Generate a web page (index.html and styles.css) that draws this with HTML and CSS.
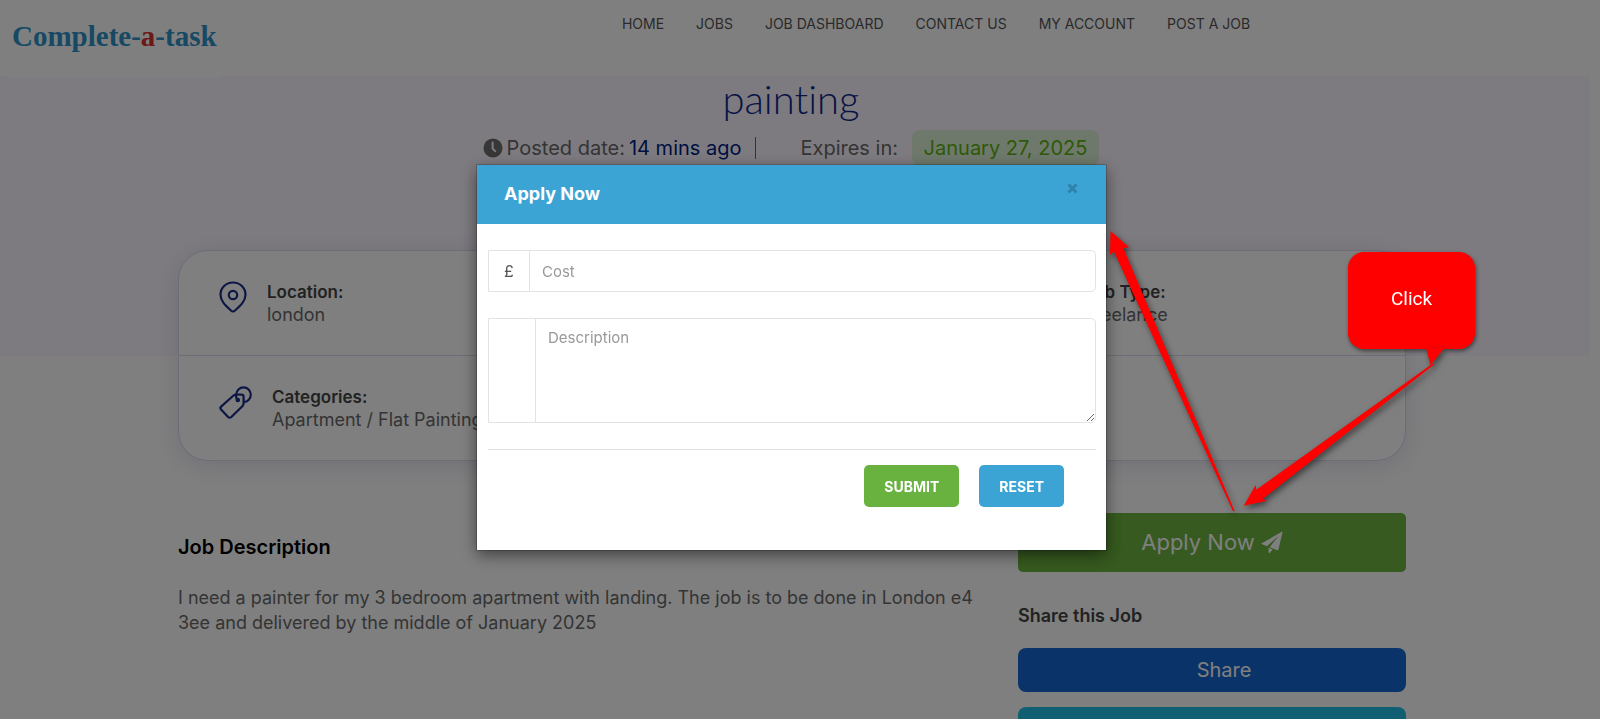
FILE: index.html
```html
<!DOCTYPE html>
<html lang="en">
<head>
  <meta charset="UTF-8" />
  <meta name="viewport" content="width=device-width, initial-scale=1.0"/>
  <title>painting – Complete-a-task</title>
  <link rel="stylesheet" href="styles.css">
</head>
<body>
<div class="page">
  <header class="header">
    <a class="logo" href="#">Complete-<span>a</span>-task</a>
    <nav class="nav">
      <a href="#">HOME</a>
      <a href="#">JOBS</a>
      <a href="#">JOB DASHBOARD</a>
      <a href="#">CONTACT US</a>
      <a href="#">MY ACCOUNT</a>
      <a href="#">POST A JOB</a>
    </nav>
  </header>

  <section class="hero">
    <h1>painting</h1>
    <div class="meta">
      <div class="posted">
        <svg width="20" height="20" viewBox="0 0 20 20">
          <circle cx="10" cy="10" r="9.500" fill="#6e6e6e"/>
          <path d="M9.600 4.500v6l2.600 2.600" fill="none" stroke="#fbf7ff" stroke-width="2" stroke-linecap="round" stroke-linejoin="round"/>
        </svg>
        Posted date: <span class="ago">14 mins ago</span>
      </div>
      <div class="expires">Expires in: <span class="pill">January 27, 2025</span></div>
    </div>
  </section>

  <main class="container">
    <div class="info-card">
      <div class="info-row">
        <div class="info-item">
          <svg width="28" height="32" viewBox="0 0 28 32" fill="none" stroke="#1c2c86" stroke-width="2.200" stroke-linejoin="round">
            <path d="M14 30.500c-.8 0-1.400-.4-2-1C6.500 24.600 1.500 20 1.500 13.700 1.500 6.800 7 1.500 14 1.500s12.500 5.300 12.500 12.200c0 6.300-5 10.900-10.500 15.800-.6.600-1.200 1-2 1z"/>
            <circle cx="14" cy="14" r="4.200"/>
          </svg>
          <div>
            <h5>Location:</h5>
            <p>london</p>
          </div>
        </div>
        <div class="info-item"></div>
        <div class="info-item">
          <svg width="28" height="32" viewBox="0 0 28 32" fill="none" stroke="#1c2c86" stroke-width="2.200">
            <rect x="2" y="8" width="24" height="20" rx="3"/>
            <path d="M9 8V4h10v4M2 17h24"/>
          </svg>
          <div>
            <h5>Job Type:</h5>
            <p>Freelance</p>
          </div>
        </div>
      </div>
      <div class="info-row">
        <div class="info-item">
          <svg width="33" height="33" viewBox="0 0 33 33" fill="none" stroke="#1c2c86" stroke-width="2.200" stroke-linejoin="round" stroke-linecap="round">
            <path d="M14.500 9.500 2.100 20.600c-1 1-1 2 0 3l7 7.400c1 1 2.200 1 3.200 0L23.600 20c.7-.8 1-1.400 1-2.400V10.600c0-1.200-.8-2-2-2l-5.200-.1c-1.200 0-2 .2-2.900 1z"/>
            <path d="M17.200 8.500A7.300 7.300 0 1 1 24.800 16"/>
            <path d="M17.200 8.500c-.4 2 0 4 1.400 5.500"/>
            <circle cx="18.800" cy="14" r="1.200" fill="#1c2c86"/>
          </svg>
          <div>
            <h5>Categories:</h5>
            <p>Apartment / Flat Painting</p>
          </div>
        </div>
      </div>
    </div>

    <div class="columns">
      <article class="description">
        <h3>Job Description</h3>
        <p>I need a painter for my 3 bedroom apartment with landing. The job is to be done in London e4 3ee and delivered by the middle of January 2025</p>
      </article>
      <aside class="sidebar">
        <button class="apply-btn" type="button">Apply Now
          <svg width="22" height="22" viewBox="0 0 22 22" fill="#fff">
            <path d="M21.700.3 0 12.700l6 2.600L17.500 5 8.700 16.200l6.800 2.900c.9.400 1.900-.1 2.100-1.100z"/>
            <path d="M7.500 16.800v4.200c0 1 1.200 1.300 1.800.5l2.300-3z"/>
          </svg>
        </button>
        <h4>Share this Job</h4>
        <a class="share facebook" href="#">Share</a>
        <a class="share twitter" href="#" aria-label="Twitter"></a>
      </aside>
    </div>
  </main>
</div>

<div class="backdrop"></div>

<div class="modal" role="dialog" aria-labelledby="applyTitle">
  <div class="modal-dialog">
    <div class="modal-header">
      <h4 id="applyTitle">Apply Now</h4>
      <button class="close" type="button" aria-label="Close">
        <svg width="11" height="11" viewBox="0 0 11 11" stroke="#2f82a9" stroke-width="3"><path d="M1.500 1.500l8 8M9.500 1.500l-8 8"/></svg>
      </button>
    </div>
    <form class="modal-body">
      <div class="field">
        <label class="addon" for="cost">£</label>
        <input type="text" id="cost" placeholder="Cost">
      </div>
      <div class="field">
        <label class="addon wide" for="description" aria-label="Description"></label>
        <textarea id="description" placeholder="Description"></textarea>
      </div>
      <div class="actions">
        <button class="btn submit" type="submit">SUBMIT</button>
        <button class="btn reset" type="reset">RESET</button>
      </div>
    </form>
  </div>
</div>

<!-- hint arrows and callout -->
<div class="hints">
  <div class="callout">Click</div>
  <svg class="arrows" width="400" height="300" viewBox="1100 220 400 300" fill="#f00">
    <path d="M1110.500 231 1129 247.300 1123.400 248.300 1234.600 511 1233 511.300 1114 251.700 1110 255z"/>
    <path d="M1243.800 505.700 1255.600 485 1256.300 489.700 1433.400 363 1434.200 364.500 1262.700 499 1267 500.700z"/>
    <path d="M1426 348l4.500 17 14-17z"/>
  </svg>
</div>
</body>
</html>
```
FILE: styles.css
```css
* {
  box-sizing: border-box;
}

body {
  margin: 0;
  font-family: Inter, sans-serif;
  font-size: 18px;
  line-height: 25px;
  color: #696969;
  background: #fff;
}
h1, h3, h4, h5, p {
  margin: 0;
}
a {
  text-decoration: none;
}
button {
  font-family: inherit;
  border: none;
  cursor: pointer;
}
/* page does not scroll while the modal is open */
.page {
  height: 100vh;
  overflow: hidden;
  padding-right: 10px;
}

/* header */
.header {
  display: flex;
  align-items: flex-start;
  height: 76px;
}
.logo {
  width: 210px;
  height: 78px;
  margin-left: 10px;
  padding-left: 2px;
  font-family: "Liberation Serif", serif;
  font-size: 29px;
  font-weight: bold;
  line-height: 72px;
  color: #2f92c8;
  background: #fff;
  z-index: 1;
  white-space: nowrap;
}
.logo span {
  color: #d8302e;
}
.nav {
  flex: 1;
  display: flex;
  justify-content: center;
  gap: 32px;
  padding-top: 12px;
  padding-left: 62px;
}
.nav a {
  font-size: 14px;
  line-height: 24px;
  color: #555;
}

/* hero */
.hero {
  height: 280px;
  padding-right: 8px;
  background: #fbf7ff;
  text-align: center;
}
.hero h1 {
  font-family: Lato, sans-serif;
  font-size: 40px;
  font-weight: 300;
  font-variant-ligatures: none;
  line-height: 46px;
  color: #10288a;
}
.meta {
  display: flex;
  justify-content: center;
  align-items: center;
  margin-top: 8px;
  font-size: 20px;
  line-height: 36px;
}
.posted {
  display: flex;
  align-items: center;
  gap: 4px;
}
.posted::after {
  content: "";
  height: 22px;
  margin-left: 10px;
  border-left: 1px solid #696969;
}
.ago {
  color: #001c84;
}
.expires {
  margin-left: 44px;
}
.pill {
  display: inline-block;
  margin-left: 8px;
  padding: 0 12px;
  border-radius: 8px;
  color: #5db312;
  background: #def2d6;
}

/* content */
.container {
  max-width: 1234px;
  margin: -106px auto 0;
  padding-right: 6px;
}
.info-card {
  background: #fff;
  border: 1px solid #dcd8ee;
  border-radius: 30px;
  box-shadow: 0 5px 25px rgba(65, 40, 140, 0.15);
}
.info-row {
  display: grid;
  grid-template-columns: repeat(3, 1fr);
  height: 104px;
}
.info-row + .info-row {
  height: 105px;
  border-top: 1px solid #dcd8ee;
}
.info-item {
  display: flex;
  gap: 20px;
  padding: 30px 0 0 40px;
  white-space: nowrap;
}
.info-item h5 {
  font-size: 17px;
  font-weight: 600;
  line-height: 22px;
  color: #444;
}
.info-item p {
  font-size: 18px;
  line-height: 24px;
}
.columns {
  display: flex;
  justify-content: space-between;
  padding-top: 52px;
}
.description {
  width: 805px;
  padding-top: 22px;
}
.description h3 {
  margin-bottom: 25px;
  font-size: 20px;
  font-weight: 600;
  line-height: 25px;
  color: #000;
}
.sidebar {
  width: 388px;
}
.apply-btn {
  display: flex;
  align-items: center;
  justify-content: center;
  gap: 6px;
  width: 100%;
  height: 59px;
  padding-bottom: 3px;
  font-size: 22px;
  color: #fff;
  background: #6cb43e;
  border-radius: 5px;
}
.sidebar h4 {
  margin: 31px 0 20px;
  font-size: 18px;
  font-weight: 600;
  line-height: 25px;
  color: #444;
}
.share {
  display: block;
  height: 44px;
  margin-bottom: 15px;
  padding-left: 24px;
  border-radius: 8px;
  font-size: 20px;
  line-height: 44px;
  text-align: center;
  color: #fff;
}
.facebook {
  background: #1468d2;
}
.twitter {
  background: #22bee6;
}

/* modal */
.backdrop {
  position: fixed;
  inset: 0;
  background: rgba(0, 0, 0, 0.5);
  z-index: 10;
}
.modal {
  position: fixed;
  inset: 0;
  padding-right: 17px;
  z-index: 20;
}
.modal-dialog {
  max-width: 629px;
  margin: 165px auto 0;
  background: #fff;
  box-shadow: 0 5px 15px rgba(0, 0, 0, 0.5), 0 0 0 1px rgba(0, 0, 0, 0.2);
}
.modal-header {
  display: flex;
  justify-content: space-between;
  height: 59px;
  padding: 0 28px 0 27px;
  background: #3ca4d4;
}
.modal-header h4 {
  font-size: 18px;
  font-weight: 700;
  line-height: 58px;
  color: #fff;
}
.close {
  display: flex;
  margin-top: 18px;
  padding: 0;
  background: none;
}
.modal-body {
  padding: 26px 10px 43px 11px;
}
.field {
  display: flex;
  margin-bottom: 26px;
  border: 1px solid #e3e3e3;
  border-radius: 0 5px 5px 0;
}
.addon {
  width: 41px;
  border-right: 1px solid #e3e3e3;
  font-size: 16px;
  line-height: 40px;
  text-align: center;
  color: #555;
}
.addon.wide {
  width: 47px;
}
.field input,
.field textarea {
  flex: 1;
  height: 40px;
  padding: 0 12px;
  border: none;
  outline: none;
  font-family: inherit;
  font-size: 15px;
  color: #555;
  background: none;
}
.field textarea {
  height: 103px;
  padding: 8px 12px;
  line-height: 22px;
  resize: vertical;
}
.field ::placeholder {
  color: #999;
}
.actions {
  display: flex;
  justify-content: flex-end;
  gap: 20px;
  padding: 15px 32px 0 0;
  border-top: 1px solid #e3e3e3;
}
.btn {
  height: 42px;
  padding: 0 20px;
  border-radius: 5px;
  font-size: 14px;
  font-weight: 700;
  color: #fff;
}
.submit {
  background: #6ab23f;
}
.reset {
  background: #3ca4d4;
}

/* hints */
.hints {
  position: fixed;
  top: 0;
  left: 50%;
  z-index: 30;
}
.arrows {
  position: absolute;
  top: 220px;
  left: 300px;
  filter: drop-shadow(2px 3px 3px rgba(0, 0, 0, 0.5));
}
.callout {
  position: absolute;
  top: 252px;
  left: 548px;
  width: 127px;
  height: 97px;
  border-radius: 16px;
  font-family: Roboto, sans-serif;
  font-size: 19px;
  line-height: 93px;
  text-align: center;
  color: #fff;
  background: #f00;
  box-shadow: 1px 2px 4px rgba(0, 0, 0, 0.5);
}
```
